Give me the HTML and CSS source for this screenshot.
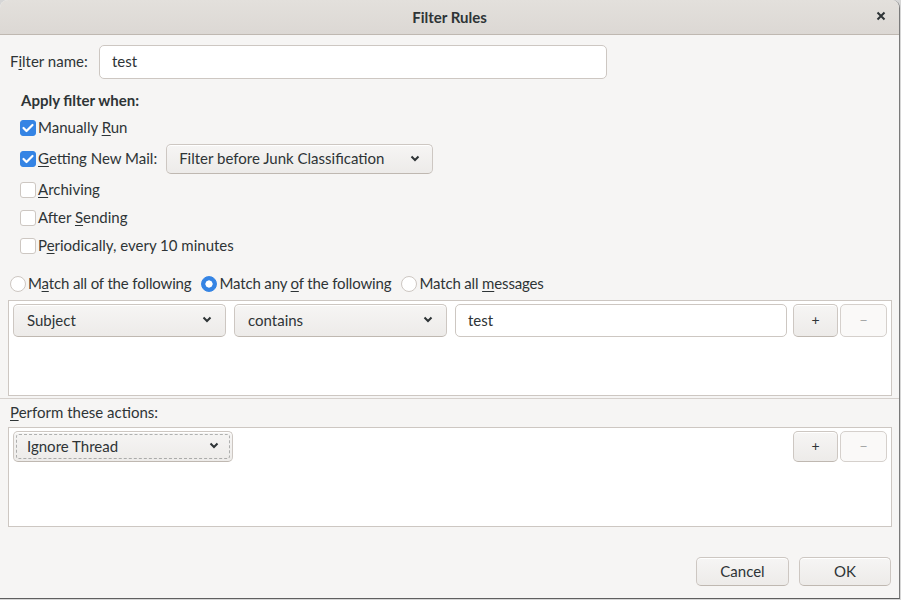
FILE: index.html
```html
<!DOCTYPE html>
<html>
<head>
<meta charset="utf-8">
<title>Filter Rules</title>
<link rel="stylesheet" href="styles.css">
</head>
<body>
<div class="window">
  <header class="titlebar">
    <span class="title">Filter Rules</span>
    <span class="close"><svg width="10" height="10" viewBox="0 0 10 10"><path d="M1.5 1.5 L8.5 8.5 M8.5 1.5 L1.5 8.5" stroke="#2e3436" stroke-width="2" fill="none"/></svg></span>
  </header>
  <main class="content">
    <div class="name-row">
      <label class="name-label">F<u>i</u>lter name:</label>
      <div class="entry name-entry">test</div>
    </div>

    <section class="apply">
      <div class="apply-title">Apply filter when:</div>
      <div class="check-row r-manual">
        <span class="cb checked"><svg width="16" height="16" viewBox="0 0 16 16"><path d="M3.5 8 L6.5 11 L12.5 5" stroke="#fff" stroke-width="2.2" fill="none" stroke-linecap="round" stroke-linejoin="round"/></svg></span>
        <span class="lbl">Manually <u>R</u>un</span>
      </div>
      <div class="check-row r-new">
        <span class="cb checked"><svg width="16" height="16" viewBox="0 0 16 16"><path d="M3.5 8 L6.5 11 L12.5 5" stroke="#fff" stroke-width="2.2" fill="none" stroke-linecap="round" stroke-linejoin="round"/></svg></span>
        <span class="lbl"><u>G</u>etting New Mail:</span>
        <div class="combo combo-junk"><span>Filter before Junk Classification</span><svg class="chev" width="10" height="7" viewBox="0 0 10 7"><path d="M1.5 1.5 L5 5 L8.5 1.5" stroke="#2e3436" stroke-width="2" fill="none"/></svg></div>
      </div>
      <div class="check-row r-arch">
        <span class="cb"></span>
        <span class="lbl"><u>A</u>rchiving</span>
      </div>
      <div class="check-row">
        <span class="cb"></span>
        <span class="lbl">After <u>S</u>ending</span>
      </div>
      <div class="check-row">
        <span class="cb"></span>
        <span class="lbl">P<u>e</u>riodically, every 10 minutes</span>
      </div>
    </section>

    <div class="radio-row">
      <span class="radio-item"><span class="radio"></span><span class="lbl">M<u>a</u>tch all of the following</span></span>
      <span class="radio-item"><span class="radio selected"></span><span class="lbl">Match any <u>o</u>f the following</span></span>
      <span class="radio-item"><span class="radio"></span><span class="lbl">Match all <u>m</u>essages</span></span>
    </div>

    <div class="list-box rules-box">
      <div class="rule-row">
        <div class="combo combo-field"><span>Subject</span><svg class="chev" width="10" height="7" viewBox="0 0 10 7"><path d="M1.5 1.5 L5 5 L8.5 1.5" stroke="#2e3436" stroke-width="2" fill="none"/></svg></div>
        <div class="combo combo-op"><span>contains</span><svg class="chev" width="10" height="7" viewBox="0 0 10 7"><path d="M1.5 1.5 L5 5 L8.5 1.5" stroke="#2e3436" stroke-width="2" fill="none"/></svg></div>
        <div class="entry rule-entry">test</div>
        <div class="btn-pair">
          <span class="btn small-btn">+</span>
          <span class="btn small-btn disabled">−</span>
        </div>
      </div>
    </div>

    <div class="pane-sep"></div>

    <div class="actions-label"><u>P</u>erform these actions:</div>

    <div class="list-box actions-box">
      <div class="rule-row action-row">
        <div class="combo combo-action focused"><span>Ignore Thread</span><svg class="chev" width="10" height="7" viewBox="0 0 10 7"><path d="M1.5 1.5 L5 5 L8.5 1.5" stroke="#2e3436" stroke-width="2" fill="none"/></svg></div>
        <div class="btn-pair">
          <span class="btn small-btn">+</span>
          <span class="btn small-btn disabled">−</span>
        </div>
      </div>
    </div>

    <div class="dialog-buttons">
      <span class="btn dlg-btn cancel">Cancel</span>
      <span class="btn dlg-btn ok">OK</span>
    </div>
  </main>
</div>
</body>
</html>
```

FILE: styles.css
```css
html, body {
  margin: 0;
  padding: 0;
  background: #d6d6d6;
}

body {
  font-family: Lato, "Noto Sans", sans-serif;
  font-size: 15px;
  color: #2e3436;
}

u {
  text-decoration: underline;
  text-underline-offset: 2px;
  text-decoration-thickness: 1px;
}

.window {
  width: 899px;
  height: 598px;
  background: #f6f5f4;
  border-right: 1px solid #7a7a7a;
  border-bottom: 1px solid #5f5f5f;
  border-radius: 8px 8px 0 0;
  overflow: hidden;
  display: flex;
  flex-direction: column;
}

.titlebar {
  height: 34px;
  flex: 0 0 34px;
  border-bottom: 1px solid #bfb8b1;
  background: linear-gradient(#e3e0dc, #dcd8d4);
  display: flex;
  align-items: center;
  justify-content: center;
  position: relative;
}

.title {
  font-weight: bold;
  font-size: 15px;
}

.close {
  position: absolute;
  right: 13px;
  top: 11px;
  width: 10px;
  height: 10px;
  display: flex;
}

.content {
  display: flex;
  flex-direction: column;
}

/* name row */
.name-row {
  margin: 10px 0 0 10px;
  display: flex;
  align-items: center;
  height: 34px;
}

.name-label {
  width: 89px;
  margin-top: -2px;
}

.entry {
  box-sizing: border-box;
  background: #fff;
  border: 1px solid #cdc7c2;
  border-radius: 5px;
  display: flex;
  align-items: center;
  padding: 0 0 2px 12px;
}

.name-entry {
  width: 508px;
  height: 34px;
}

/* apply section */
.apply {
  margin-left: 20px;
  display: flex;
  flex-direction: column;
}

.apply-title {
  margin-top: 12px;
  height: 20px;
  line-height: 18px;
  font-weight: bold;
  padding-left: 1px;
}

.check-row {
  height: 28px;
  display: flex;
  align-items: center;
  gap: 2px;
}

.lbl {
  padding-bottom: 2px;
}

.r-manual { margin-top: 3px; }
.r-new { margin-top: 2px; height: 30px; }
.r-arch { margin-top: 2px; }

.cb {
  box-sizing: border-box;
  width: 16px;
  height: 16px;
  border-radius: 3px;
  background: #fff;
  border: 1px solid #cdc7c2;
  display: flex;
}

.cb.checked {
  background: #3584e4;
  border-color: #3584e4;
}

.cb.checked svg {
  margin: -1px;
}

.combo {
  box-sizing: border-box;
  height: 30px;
  background: linear-gradient(#f6f5f4, #edebe9);
  border: 1px solid #cdc7c2;
  border-bottom-color: #bfb8b1;
  border-radius: 5px;
  box-shadow: inset 0 1px #fff;
  display: flex;
  align-items: center;
  justify-content: space-between;
  padding: 0 12px 2px 12px;
}

.combo-junk {
  width: 267px;
  margin-left: 7px;
}

/* radio row */
.radio-row {
  margin: 10px 0 0 10px;
  height: 28px;
  display: flex;
  align-items: center;
  gap: 10px;
  letter-spacing: -0.15px;
}

.radio-item {
  display: flex;
  align-items: center;
  gap: 2px;
}

.radio {
  box-sizing: border-box;
  width: 16px;
  height: 16px;
  border-radius: 50%;
  background: #fff;
  border: 1px solid #cdc7c2;
}

.radio.selected {
  background: radial-gradient(circle, #fff 0, #fff 3.3px, #3584e4 3.9px);
  border-color: #3584e4;
}

/* list boxes */
.list-box {
  box-sizing: border-box;
  margin: 2px 7px 0 8px;
  background: #fff;
  border: 1px solid #cdc7c2;
  padding: 3px 4px 0 4px;
}

.rules-box {
  height: 96px;
}

.rule-row {
  display: flex;
  align-items: center;
  height: 33px;
}

.combo-field, .combo-op {
  width: 213px;
  height: 33px;
  padding: 0 13px 2px 13px;
}

.combo-op {
  margin-left: 8px;
}

.rule-entry {
  margin-left: 8px;
  width: 332px;
  height: 33px;
}

.btn-pair {
  margin-left: auto;
  display: flex;
  gap: 2px;
}

.btn {
  box-sizing: border-box;
  background: linear-gradient(#f6f5f4, #edebe9);
  border: 1px solid #cdc7c2;
  border-bottom-color: #bfb8b1;
  border-radius: 5px;
  box-shadow: inset 0 1px #fff;
  display: flex;
  align-items: center;
  justify-content: center;
  padding-bottom: 2px;
}

.small-btn {
  width: 45px;
  height: 33px;
  font-size: 14px;
}

.small-btn.disabled {
  width: 47px;
  background: #faf9f8;
  border-color: #d5d0cc;
  box-shadow: none;
  color: #a5a7a7;
}

.pane-sep {
  margin-top: 2px;
  height: 1px;
  background: #d5d0cc;
}

.actions-label {
  margin: 4px 0 0 10px;
  height: 20px;
  line-height: 18px;
}

.actions-box {
  margin-top: 4px;
  height: 100px;
}

.action-row {
  height: 31px;
}

.combo-action {
  width: 220px;
  height: 31px;
  padding: 0 13px 2px 13px;
  position: relative;
}

.combo-action.focused::after {
  content: "";
  position: absolute;
  inset: 2px;
  border: 1px dashed rgba(46, 52, 54, 0.35);
  border-radius: 3px;
}

.action-row .small-btn {
  height: 31px;
}

.dialog-buttons {
  margin: 30px 8px 0 0;
  display: flex;
  justify-content: flex-end;
  gap: 10px;
}

.dlg-btn {
  height: 29px;
}

.cancel { width: 93px; }
.ok { width: 92px; }
```
